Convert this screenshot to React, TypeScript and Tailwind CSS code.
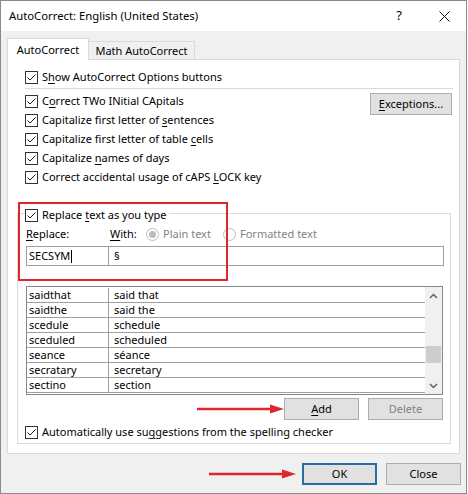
import React from "react";

const font = { fontFamily: '"Noto Sans", "Segoe UI", sans-serif' };

const U = ({ children }: { children: React.ReactNode }) => (
  <span className="underline decoration-1 underline-offset-[2px]">{children}</span>
);

const Check = () => (
  <span className="flex h-[13px] w-[13px] shrink-0 items-center justify-center border border-[#333333] bg-white">
    <svg width="11" height="11" viewBox="0 0 11 11">
      <path d="M1.5 5.5L4 8L9.5 2.5" fill="none" stroke="#1a1a1a" strokeWidth="1" />
    </svg>
  </span>
);

const CheckRow = ({ children }: { children: React.ReactNode }) => (
  <div className="flex h-[19px] items-center gap-[4px]">
    <Check />
    <span>{children}</span>
  </div>
);

const Radio = ({ selected }: { selected?: boolean }) => (
  <span className="flex h-[13px] w-[13px] shrink-0 items-center justify-center rounded-full border border-[#bcbcbc] bg-white">
    {selected && <span className="h-[7px] w-[7px] rounded-full bg-[#bcbcbc]" />}
  </span>
);

const Btn = ({ children, disabled, focused }: { children: React.ReactNode; disabled?: boolean; focused?: boolean }) => (
  <div
    className={
      focused
        ? "flex h-[22px] w-[75px] items-center justify-center border-2 border-[#2b6ca3] bg-[#e1e1e1]"
        : "flex h-[22px] w-[75px] items-center justify-center border border-[#adadad] bg-[#e1e1e1]"
    }
  >
    <span className={disabled ? "text-[#838383]" : "text-black"}>{children}</span>
  </div>
);

const Arrow = ({ className }: { className: string }) => (
  <svg className={"absolute " + className} width="88" height="12" viewBox="0 0 88 12">
    <line x1="0" y1="6" x2="76" y2="6" stroke="#e0252f" strokeWidth="2.5" />
    <path d="M73 1.5L87 6L73 10.5Z" fill="#e0252f" />
  </svg>
);

const entries = [
  ["saidthat", "said that"],
  ["saidthe", "said the"],
  ["scedule", "schedule"],
  ["sceduled", "scheduled"],
  ["seance", "séance"],
  ["secratary", "secretary"],
  ["sectino", "section"],
];

export default function App() {
  return (
    <div className="relative h-[494px] w-[468px] overflow-hidden bg-white text-[11px] text-black" style={font}>
      <div className="flex h-[494px] w-[467px] flex-col border border-[#8a8a8a] bg-[#f0f0f0]">
        {/* title bar */}
        <div className="flex h-[30px] shrink-0 items-center bg-white pl-[8px] text-[11.3px]">
          <span>AutoCorrect: English (United States)</span>
          <span className="ml-auto mr-[37px] text-[13px]">?</span>
          <svg className="mr-[16px]" width="11" height="11" viewBox="0 0 11 11">
            <path d="M0.5 0.5L10.5 10.5M10.5 0.5L0.5 10.5" stroke="#111" strokeWidth="1" />
          </svg>
        </div>

        <div className="flex flex-1 flex-col px-[6px] pt-[7px]">
          {/* tabs */}
          <div className="flex items-end">
            <div className="relative z-10 -mb-px flex h-[22px] w-[82px] items-center justify-center border-x border-t border-[#d9d9d9] bg-white pt-[1px]">
              AutoCorrect
            </div>
            <div className="-ml-px flex h-[18px] w-[107px] items-center justify-center border-x border-t border-[#d9d9d9] bg-[#f0f0f0] pt-[1px]">
              Math AutoCorrect
            </div>
          </div>

          {/* panel */}
          <div className="flex h-[395px] flex-col border border-[#d9d9d9] bg-white pl-[9px] pr-[8px] pt-[8px]">
            <div className="-mr-[2px] pl-[8px]">
              <CheckRow>
                S<U>h</U>ow AutoCorrect Options buttons
              </CheckRow>
              <div className="mt-[1px] h-px bg-[#dadada]" />
              <div className="mt-[3px] flex items-start">
                <div className="flex flex-col">
                  <CheckRow>
                    C<U>o</U>rrect TWo INitial CApitals
                  </CheckRow>
                  <CheckRow>
                    Capitalize first letter of <U>s</U>entences
                  </CheckRow>
                  <CheckRow>
                    Capitalize first letter of table <U>c</U>ells
                  </CheckRow>
                  <CheckRow>
                    Capitalize <U>n</U>ames of days
                  </CheckRow>
                  <CheckRow>
                    Correct accidental usage of cAPS <U>L</U>OCK key
                  </CheckRow>
                </div>
                <div className="ml-auto mr-[1px] mt-[1px] flex h-[22px] w-[82px] items-center justify-center border border-[#adadad] bg-[#e1e1e1]">
                  <span>
                    <U>E</U>xceptions...
                  </span>
                </div>
              </div>
            </div>

            {/* replace group */}
            <div className="mt-[26px] flex flex-col border border-[#dcdcdc] pb-[3px] pl-[8px] pr-[6px]">
              <div className="-ml-[1px] -mt-[7px] flex h-[16px] items-center gap-[4px] self-start bg-white pr-[2px]">
                <Check />
                <span>
                  Replace <U>t</U>ext as you type
                </span>
              </div>
              <div className="mt-[3px] flex h-[16px] items-center">
                <span className="w-[84px]">
                  <U>R</U>eplace:
                </span>
                <span className="w-[36px]">
                  <U>W</U>ith:
                </span>
                <Radio selected />
                <span className="ml-[4px] w-[60px] text-[#838383]">Plain text</span>
                <Radio />
                <span className="ml-[4px] text-[#838383]">Formatted text</span>
              </div>
              <div className="mt-[4px] flex h-[20px]">
                <div className="flex w-[83px] items-center border border-[#a0a0a0] pl-[2px]">
                  <span>SECSYM</span>
                  <span className="ml-px h-[13px] w-px bg-black" />
                </div>
                <div className="-ml-px flex flex-1 items-center border border-[#a0a0a0] pl-[5px]">§</div>
              </div>

              {/* list */}
              <div className="mr-[1px] mt-[20px] flex h-[109px] border border-[#828790] pt-[1px]">
                <div className="flex flex-1 flex-col">
                  {entries.map(([a, b]) => (
                    <div key={a} className="flex h-[15px] border-b border-[#a0a0a0]">
                      <div className="flex w-[82px] items-center border-r border-[#a0a0a0] pl-[2px]">{a}</div>
                      <div className="flex flex-1 items-center pl-[5px]">{b}</div>
                    </div>
                  ))}
                </div>
                <div className="-mt-px flex w-[17px] flex-col bg-[#f0f0f0]">
                  <div className="flex h-[17px] items-center justify-center">
                    <svg width="9" height="6" viewBox="0 0 9 6">
                      <path d="M1 5L4.5 1.5L8 5" fill="none" stroke="#606060" strokeWidth="1.5" />
                    </svg>
                  </div>
                  <div className="mx-[1px] mt-[42px] h-[17px] bg-[#cdcdcd]" />
                  <div className="mt-auto flex h-[17px] items-center justify-center">
                    <svg width="9" height="6" viewBox="0 0 9 6">
                      <path d="M1 1L4.5 4.5L8 1" fill="none" stroke="#606060" strokeWidth="1.5" />
                    </svg>
                  </div>
                </div>
              </div>

              <div className="mr-[1px] mt-[3px] flex justify-end gap-[9px]">
                <Btn>
                  <U>A</U>dd
                </Btn>
                <Btn disabled>Delete</Btn>
              </div>

              <div className="-ml-[1px] mt-[4px] flex h-[16px] items-center gap-[4px]">
                <Check />
                <span>
                  Automatically use su<U>g</U>gestions from the spelling checker
                </span>
              </div>
            </div>
          </div>

          {/* bottom buttons */}
          <div className="-mr-[1px] mt-[9px] flex justify-end gap-[9px]">
            <Btn focused>OK</Btn>
            <Btn>Close</Btn>
          </div>
        </div>
      </div>

      {/* annotations */}
      <div className="absolute left-[18px] top-[202px] h-[79px] w-[210px] border-2 border-[#e0252f]" />
      <Arrow className="left-[197px] top-[403px]" />
      <Arrow className="left-[209px] top-[468px]" />
    </div>
  );
}
